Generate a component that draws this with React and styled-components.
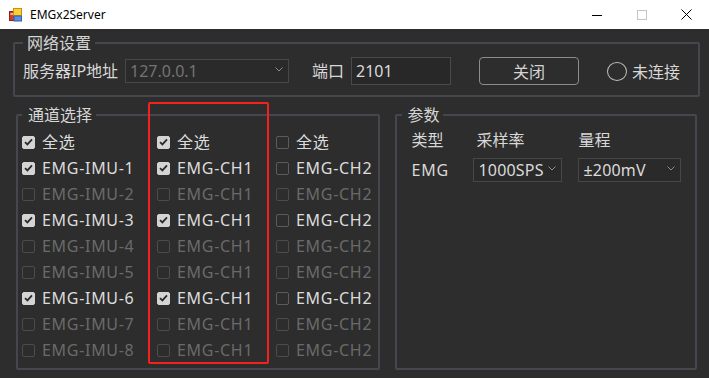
import React from 'react'
import styled, { createGlobalStyle } from 'styled-components'

const GlobalStyle = createGlobalStyle`
    html, body {
        margin: 0;
        padding: 0;
        background: #2d2d2d;
    }
    body {
        font-family: "Noto Sans", "Noto Sans CJK SC", sans-serif;
    }
`

const channels = [
    [
        { label: '全选', checked: true, enabled: true },
        { label: 'EMG-IMU-1', checked: true, enabled: true },
        { label: 'EMG-IMU-2', checked: false, enabled: false },
        { label: 'EMG-IMU-3', checked: true, enabled: true },
        { label: 'EMG-IMU-4', checked: false, enabled: false },
        { label: 'EMG-IMU-5', checked: false, enabled: false },
        { label: 'EMG-IMU-6', checked: true, enabled: true },
        { label: 'EMG-IMU-7', checked: false, enabled: false },
        { label: 'EMG-IMU-8', checked: false, enabled: false },
    ],
    [
        { label: '全选', checked: true, enabled: true },
        { label: 'EMG-CH1', checked: true, enabled: true },
        { label: 'EMG-CH1', checked: false, enabled: false },
        { label: 'EMG-CH1', checked: true, enabled: true },
        { label: 'EMG-CH1', checked: false, enabled: false },
        { label: 'EMG-CH1', checked: false, enabled: false },
        { label: 'EMG-CH1', checked: true, enabled: true },
        { label: 'EMG-CH1', checked: false, enabled: false },
        { label: 'EMG-CH1', checked: false, enabled: false },
    ],
    [
        { label: '全选', checked: false, enabled: true },
        { label: 'EMG-CH2', checked: false, enabled: true },
        { label: 'EMG-CH2', checked: false, enabled: false },
        { label: 'EMG-CH2', checked: false, enabled: true },
        { label: 'EMG-CH2', checked: false, enabled: false },
        { label: 'EMG-CH2', checked: false, enabled: false },
        { label: 'EMG-CH2', checked: false, enabled: true },
        { label: 'EMG-CH2', checked: false, enabled: false },
        { label: 'EMG-CH2', checked: false, enabled: false },
    ],
]

const columnWidths = [135, 119, 100]

const AppIcon = () => (
    <svg width="14" height="14" viewBox="0 0 14 14">
        <rect x="0.5" y="3.5" width="5" height="9" fill="#d23a2a" stroke="#8a2418" />
        <rect x="1.5" y="5" width="3" height="2" fill="#f3b0a0" />
        <rect x="4.5" y="0.5" width="8" height="7" fill="#f8d030" stroke="#d08a10" />
        <rect x="5" y="8" width="7.5" height="5" fill="#5a8ee0" stroke="#2f5fb0" />
    </svg>
)

const Chevron = () => (
    <svg width="8" height="5" viewBox="0 0 8 5">
        <path d="M0.5 0.5 L4 4 L7.5 0.5" fill="none" stroke="#8c8c8c" strokeWidth="1" />
    </svg>
)

const CheckMark = () => (
    <svg width="9" height="8" viewBox="0 0 9 8">
        <path d="M1 4.2 L3.4 6.4 L8 1.4" fill="none" stroke="#2a2a2a" strokeWidth="1.8" />
    </svg>
)

const Check = ({ item }) => (
    <CheckRow>
        <Box $checked={item.checked} $enabled={item.enabled}>
            {item.checked && <CheckMark />}
        </Box>
        <CheckText $enabled={item.enabled}>{item.label}</CheckText>
    </CheckRow>
)

const App = () => {
    return (
        <Window>
            <GlobalStyle />
            <TitleBar>
                <TitleIcon><AppIcon /></TitleIcon>
                <TitleText>EMGx2Server</TitleText>
                <Controls>
                    <Control>
                        <svg width="10" height="10" viewBox="0 0 10 10">
                            <path d="M0 5.5 H10" stroke="#000" strokeWidth="1" />
                        </svg>
                    </Control>
                    <Control>
                        <svg width="10" height="10" viewBox="0 0 10 10">
                            <rect x="0.5" y="0.5" width="9" height="9" fill="none" stroke="#c4c4c4" strokeWidth="1" />
                        </svg>
                    </Control>
                    <Control>
                        <svg width="11" height="11" viewBox="0 0 11 11">
                            <path d="M0.5 0.5 L10.5 10.5 M10.5 0.5 L0.5 10.5" stroke="#000" strokeWidth="1" />
                        </svg>
                    </Control>
                </Controls>
            </TitleBar>

            <Main>
                <NetGroup>
                    <Legend>网络设置</Legend>
                    <NetRow>
                        <FieldLabel $width={102}>服务器IP地址</FieldLabel>
                        <Combo $width={164} $disabled>
                            <span>127.0.0.1</span>
                            <Chevron />
                        </Combo>
                        <FieldLabel $width={39} $gap={23}>端口</FieldLabel>
                        <TextBox>2101</TextBox>
                        <Button>关闭</Button>
                        <Radio />
                        <RadioText>未连接</RadioText>
                    </NetRow>
                </NetGroup>

                <LowerRow>
                    <ChannelGroup>
                        <Legend $pad="0 4px 0 6px">通道选择</Legend>
                        <Columns>
                            {channels.map((col, ci) => (
                                <Column key={ci} $width={columnWidths[ci]} $marked={ci === 1}>
                                    {col.map((item, i) => (
                                        <Check key={i} item={item} />
                                    ))}
                                </Column>
                            ))}
                        </Columns>
                    </ChannelGroup>

                    <ParamGroup>
                        <Legend $pad="0 4px 0 5px" $shift={-9}>参数</Legend>
                        <ParamGrid>
                            <HeaderCell>类型</HeaderCell>
                            <HeaderCell $indent={3}>采样率</HeaderCell>
                            <HeaderCell>量程</HeaderCell>
                            <ValueCell>EMG</ValueCell>
                            <Combo $width={89}>
                                <span>1000SPS</span>
                                <Chevron />
                            </Combo>
                            <Combo $width={103}>
                                <span>±200mV</span>
                                <Chevron />
                            </Combo>
                        </ParamGrid>
                    </ParamGroup>
                </LowerRow>
            </Main>
        </Window>
    )
}

const Window = styled.div`
    width: 709px;
    height: 378px;
    display: flex;
    flex-direction: column;
    overflow: hidden;
    background: #2d2d2d;
`

const TitleBar = styled.div`
    height: 29px;
    flex: none;
    display: flex;
    align-items: center;
    background: #ffffff;
`

const TitleIcon = styled.div`
    display: flex;
    margin-left: 9px;
    margin-top: 1px;
`

const TitleText = styled.span`
    margin-left: 7px;
    font-family: "Noto Sans", sans-serif;
    font-size: 12px;
    color: #000000;
`

const Controls = styled.div`
    display: flex;
    margin-left: auto;
    height: 100%;
`

const Control = styled.div`
    width: 45px;
    height: 100%;
    display: flex;
    align-items: center;
    justify-content: center;
`

const Main = styled.div`
    flex: 1;
    display: flex;
    flex-direction: column;
    padding: 4px 9px 0 13px;
`

const Group = styled.fieldset`
    margin: 0;
    min-width: 0;
    border: 2px solid #46464e;
    border-radius: 2px;
    box-sizing: border-box;
`

const NetGroup = styled(Group)`
    padding: 0 8px 10px 8px;
`

const Legend = styled.legend`
    padding: ${p => p.$pad || '0 4px'};
    margin-left: ${p => p.$shift || 0}px;
    font-size: 16px;
    line-height: 20px;
    color: #d6d6d6;
`

const NetRow = styled.div`
    display: flex;
    align-items: center;
    height: 28px;
    margin-top: 4px;
`

const FieldLabel = styled.span`
    width: ${p => p.$width}px;
    margin-left: ${p => p.$gap || 0}px;
    flex: none;
    font-size: 16px;
    line-height: 20px;
    color: #d8d8d8;
    white-space: nowrap;
`

const Combo = styled.div`
    width: ${p => p.$width}px;
    height: 24px;
    box-sizing: border-box;
    flex: none;
    display: flex;
    align-items: center;
    justify-content: space-between;
    padding: 0 5px 0 4px;
    border: 1px solid #474747;
    background: #2a2a2a;
    font-size: 16px;
    letter-spacing: ${p => (p.$disabled ? 0 : 0.2)}px;
    color: ${p => (p.$disabled ? '#747474' : '#dadada')};
    white-space: nowrap;

    svg {
        flex: none;
        margin-bottom: 3px;
    }
`

const TextBox = styled.div`
    width: 100px;
    height: 28px;
    box-sizing: border-box;
    flex: none;
    display: flex;
    align-items: center;
    padding-left: 4px;
    border: 1px solid #4a4a4a;
    background: #282828;
    font-size: 16px;
    color: #dadada;
`

const Button = styled.div`
    width: 100px;
    height: 28px;
    margin-left: 28px;
    box-sizing: border-box;
    flex: none;
    display: flex;
    align-items: center;
    justify-content: center;
    border: 1px solid #8c8c8c;
    border-radius: 4px;
    font-size: 16px;
    color: #d4d4d4;
`

const Radio = styled.div`
    width: 20px;
    height: 19px;
    margin-left: 28px;
    box-sizing: border-box;
    flex: none;
    border: 1.5px solid #bdbdbd;
    border-radius: 50%;
`

const RadioText = styled.span`
    margin-left: 5px;
    font-size: 16px;
    color: #d8d8d8;
`

const LowerRow = styled.div`
    display: flex;
    gap: 15px;
    height: 265px;
    margin-top: 8px;
    padding: 0 3px;
`

const ChannelGroup = styled(Group)`
    width: 365px;
    padding: 0 0 0 4px;
`

const ParamGroup = styled(Group)`
    width: 302px;
    padding: 0 0 0 14px;
`

const Columns = styled.div`
    display: flex;
    margin-top: 4px;
`

const Column = styled.div`
    position: relative;
    width: ${p => p.$width}px;
    display: flex;
    flex-direction: column;

    ${p => p.$marked && `
        &::after {
            content: '';
            position: absolute;
            left: -9px;
            right: 7px;
            top: -27px;
            bottom: -1px;
            border: 2px solid #f5211c;
            border-radius: 2px;
            pointer-events: none;
        }
    `}
`

const CheckRow = styled.div`
    height: 26px;
    display: flex;
    align-items: center;
`

const Box = styled.div`
    width: 13px;
    height: 13px;
    box-sizing: border-box;
    flex: none;
    display: flex;
    align-items: center;
    justify-content: center;
    border: 1px solid ${p => (p.$checked ? '#d4d4d4' : p.$enabled ? '#5c5c5c' : '#4c4c4c')};
    border-radius: 2px;
    background: ${p => (p.$checked ? '#d4d4d4' : 'transparent')};
`

const CheckText = styled.span`
    margin-left: 7px;
    font-size: 16px;
    line-height: 20px;
    letter-spacing: 0.7px;
    color: ${p => (p.$enabled ? '#dcdcdc' : '#6a6a6a')};
    white-space: nowrap;
`

const ParamGrid = styled.div`
    display: grid;
    grid-template-columns: 62px 105px 103px;
    grid-template-rows: 20px 24px;
    row-gap: 8px;
    align-items: center;
    margin-top: 5px;
`

const HeaderCell = styled.span`
    padding-left: ${p => p.$indent || 0}px;
    font-size: 16px;
    line-height: 20px;
    color: #d8d8d8;
`

const ValueCell = styled.span`
    font-size: 16px;
    line-height: 20px;
    letter-spacing: 0.8px;
    color: #d8d8d8;
`

export default App
